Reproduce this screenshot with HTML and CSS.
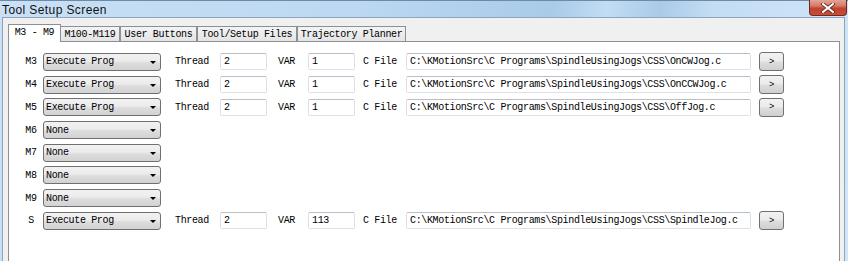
FILE: index.html
```html
<!DOCTYPE html>
<html lang="en">
<head>
  <meta charset="UTF-8">
  <title>Tool Setup Screen</title>
  <link rel="stylesheet" href="styles.css">
</head>
<body>

  <div class="window">
    <div class="titlebar">
      <span class="title">Tool Setup Screen</span>
      <div class="close-btn">
        <svg width="16" height="10" viewBox="0 0 16 10">
          <path d="M3 1 L13 9 M13 1 L3 9" stroke="#5a2a22" stroke-width="3.6" stroke-linecap="square"/>
          <path d="M3 1 L13 9 M13 1 L3 9" stroke="#ffffff" stroke-width="2" stroke-linecap="square"/>
        </svg>
      </div>
    </div>

    <div class="client">
      <div class="tabs">
        <div class="tab active">M3 - M9</div>
        <div class="tab tab-m100">M100-M119</div>
        <div class="tab tab-user">User Buttons</div>
        <div class="tab tab-files">Tool/Setup Files</div>
        <div class="tab tab-traj">Trajectory Planner</div>
      </div>

      <div class="panel">
        <div class="row">
          <span class="code">M3</span>
          <div class="select">Execute Prog<span class="arrow"></span></div>
          <span class="lbl lbl-thread">Thread</span>
          <div class="field">2</div>
          <span class="lbl lbl-var">VAR</span>
          <div class="field">1</div>
          <span class="lbl lbl-file">C File</span>
          <div class="field">C:\KMotionSrc\C Programs\SpindleUsingJogs\CSS\OnCWJog.c</div>
          <span></span>
          <div class="btn">&gt;</div>
        </div>
        <div class="row">
          <span class="code">M4</span>
          <div class="select">Execute Prog<span class="arrow"></span></div>
          <span class="lbl lbl-thread">Thread</span>
          <div class="field">2</div>
          <span class="lbl lbl-var">VAR</span>
          <div class="field">1</div>
          <span class="lbl lbl-file">C File</span>
          <div class="field">C:\KMotionSrc\C Programs\SpindleUsingJogs\CSS\OnCCWJog.c</div>
          <span></span>
          <div class="btn">&gt;</div>
        </div>
        <div class="row">
          <span class="code">M5</span>
          <div class="select">Execute Prog<span class="arrow"></span></div>
          <span class="lbl lbl-thread">Thread</span>
          <div class="field">2</div>
          <span class="lbl lbl-var">VAR</span>
          <div class="field">1</div>
          <span class="lbl lbl-file">C File</span>
          <div class="field">C:\KMotionSrc\C Programs\SpindleUsingJogs\CSS\OffJog.c</div>
          <span></span>
          <div class="btn">&gt;</div>
        </div>
        <div class="row">
          <span class="code">M6</span>
          <div class="select">None<span class="arrow"></span></div>
        </div>
        <div class="row">
          <span class="code">M7</span>
          <div class="select">None<span class="arrow"></span></div>
        </div>
        <div class="row">
          <span class="code">M8</span>
          <div class="select">None<span class="arrow"></span></div>
        </div>
        <div class="row">
          <span class="code">M9</span>
          <div class="select">None<span class="arrow"></span></div>
        </div>
        <div class="row">
          <span class="code">S</span>
          <div class="select">Execute Prog<span class="arrow"></span></div>
          <span class="lbl lbl-thread">Thread</span>
          <div class="field">2</div>
          <span class="lbl lbl-var">VAR</span>
          <div class="field">113</div>
          <span class="lbl lbl-file">C File</span>
          <div class="field">C:\KMotionSrc\C Programs\SpindleUsingJogs\CSS\SpindleJog.c</div>
          <span></span>
          <div class="btn">&gt;</div>
        </div>
      </div>
    </div>
  </div>

</body>
</html>
```

FILE: styles.css
```css
body {
  margin: 0;
  padding: 0;
  overflow: hidden;
  background: #c4dcf2;
}

.window {
  width: 848px;
  height: 261px;
  display: flex;
  flex-direction: column;
  background: linear-gradient(100deg, #c9e0f5 0%, #bcd8f2 40%, #a9cbe9 62%, #c2dcf4 68%, #aacbe8 74%, #c4ddf4 80%, #d2e6f8 100%);
  border-top: 1px solid #6f8aa6;
  box-sizing: border-box;
}

.titlebar {
  height: 18px;
  display: flex;
  justify-content: space-between;
  align-items: flex-start;
}

.title {
  font-family: "Liberation Sans", Arial, sans-serif;
  font-size: 12px;
  color: #111;
  margin: 2px 0 0 2px;
  letter-spacing: 0.4px;
}

.close-btn {
  width: 38px;
  height: 16px;
  margin-top: -1px;
  margin-right: 1px;
  border: 1px solid #6d2a22;
  border-top: none;
  border-radius: 0 0 4px 4px;
  background: linear-gradient(#e5a495 0%, #d47a68 40%, #c2412f 55%, #c94c36 100%);
  display: flex;
  justify-content: center;
  align-items: center;
  box-sizing: border-box;
}

.client {
  flex: 1;
  margin: 0 3px 0 2px;
  background: #f0f0f0;
  border: 1px solid #8ea4bd;
  border-bottom: none;
  padding: 6px 4px 0 5px;
  display: flex;
  flex-direction: column;
}

.tabs {
  display: flex;
  align-items: flex-end;
  height: 18px;
  margin-bottom: -1px;
  position: relative;
  z-index: 1;
  font-family: "Liberation Mono", "Courier New", monospace;
  font-size: 10px;
  letter-spacing: -0.35px;
  color: #000;
}

.tab {
  height: 16px;
  box-sizing: border-box;
  border: 1px solid #8c8f96;
  background: linear-gradient(#f4f4f4, #e4e4e4);
  display: flex;
  justify-content: center;
  align-items: center;
  padding-top: 1px;
  white-space: nowrap;
}

.tab.active {
  width: 53px;
  height: 18px;
  background: #fff;
  border-bottom: none;
  position: relative;
  z-index: 2;
  padding-top: 0;
  padding-bottom: 2px;
}

.tab-m100 { width: 60px; margin-left: -1px; }
.tab-user { width: 77px; }
.tab-files { width: 100px; }
.tab-traj { width: 109px; }

.panel {
  height: 240px;
  background: #fff;
  border: 1px solid #8c8f96;
  padding-top: 8.6px;
  font-family: "Liberation Mono", "Courier New", monospace;
  font-size: 10px;
  letter-spacing: -0.35px;
  color: #000;
}

.row {
  display: grid;
  grid-template-columns: 34px 118px 59px 47px 41px 47px 51px 345px 8px 25px;
  align-items: center;
  height: 22.7px;
}

.code {
  padding-left: 11px;
  padding-right: 1px;
  text-align: center;
}

.select {
  height: 18px;
  box-sizing: border-box;
  border: 1px solid #707070;
  border-radius: 3px;
  background: linear-gradient(#f2f2f2 0%, #ebebeb 45%, #dddddd 55%, #d2d2d2 100%);
  padding-left: 2px;
  display: flex;
  align-items: center;
  position: relative;
}

.arrow {
  position: absolute;
  right: 4px;
  top: 7px;
  width: 0;
  height: 0;
  border-left: 3px solid transparent;
  border-right: 3px solid transparent;
  border-top: 3px solid #000;
}

.lbl-thread { padding-left: 14px; }
.lbl-var { padding-left: 11px; }
.lbl-file { padding-left: 8px; }

.field {
  height: 17px;
  box-sizing: border-box;
  border: 1px solid #dde1e7;
  border-top-color: #b9bdc5;
  border-radius: 2px;
  padding-left: 3px;
  display: flex;
  align-items: center;
  white-space: nowrap;
  overflow: hidden;
}

.btn {
  height: 19px;
  box-sizing: border-box;
  border: 1px solid #707070;
  border-radius: 3px;
  background: linear-gradient(#f2f2f2 0%, #ebebeb 45%, #dddddd 55%, #cfcfcf 100%);
  display: flex;
  justify-content: center;
  align-items: center;
  font-size: 9px;
}
```
